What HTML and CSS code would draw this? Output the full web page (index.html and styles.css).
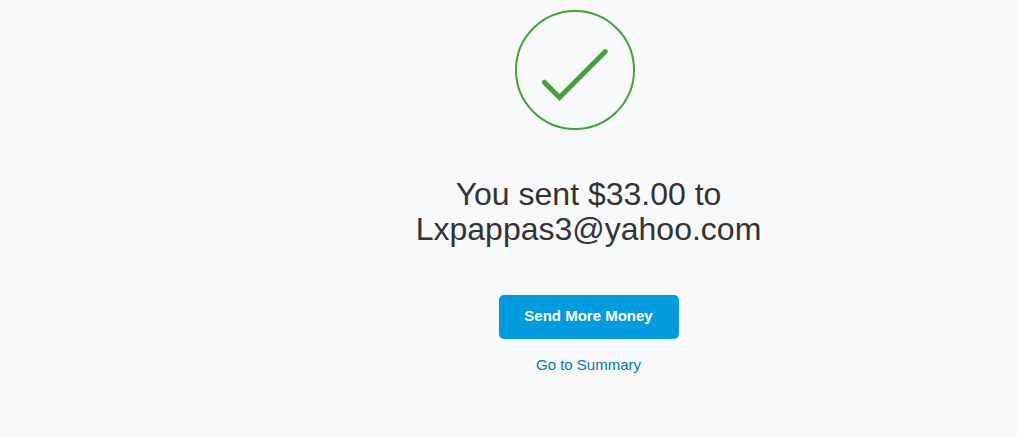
FILE: index.html
```html
<!DOCTYPE html>
<html lang="en">
<head>
<meta charset="utf-8">
<meta name="viewport" content="width=device-width, initial-scale=1">
<title>Money sent</title>
<link rel="stylesheet" href="styles.css">
</head>
<body>
<main class="confirmation">
  <svg class="status-icon" viewBox="0 0 120 120" role="img" aria-label="Success">
    <circle cx="60" cy="60" r="59" />
    <path d="M29.3 72.2L44.5 87.4L90.3 41.6" />
  </svg>
  <h1 class="message">You sent $33.00 to<br>Lxpappas3@yahoo.com</h1>
  <button class="primary-button" type="button">Send More Money</button>
  <a class="summary-link" href="#">Go to Summary</a>
</main>
</body>
</html>
```

FILE: styles.css
```css
body {
  margin: 0;
  background: #f8f9fb;
  color: #333;
  font-family: "Liberation Sans", Arial, sans-serif;
}

.confirmation {
  display: flex;
  flex-direction: column;
  align-items: center;
  padding: 10px 0 60px 160px;
}

.status-icon {
  width: 120px;
  height: 120px;
  margin-right: 28px;
  fill: none;
  stroke: #3fa535;
  stroke-width: 2;
}

.status-icon path {
  stroke-width: 5;
  stroke-linecap: round;
}

.message {
  margin: 47px 0 48px;
  font-size: 32px;
  line-height: 35px;
  font-weight: 400;
  text-align: center;
}

.primary-button {
  width: 180px;
  height: 44px;
  padding: 0 0 4px;
  border: 0;
  border-radius: 5px;
  background: #009cde;
  color: #fff;
  font: bold 15px "Liberation Sans", Arial, sans-serif;
  cursor: pointer;
}

.summary-link {
  margin-top: 16px;
  color: #0079ad;
  font-size: 15px;
  line-height: 20px;
  text-decoration: none;
}
```
